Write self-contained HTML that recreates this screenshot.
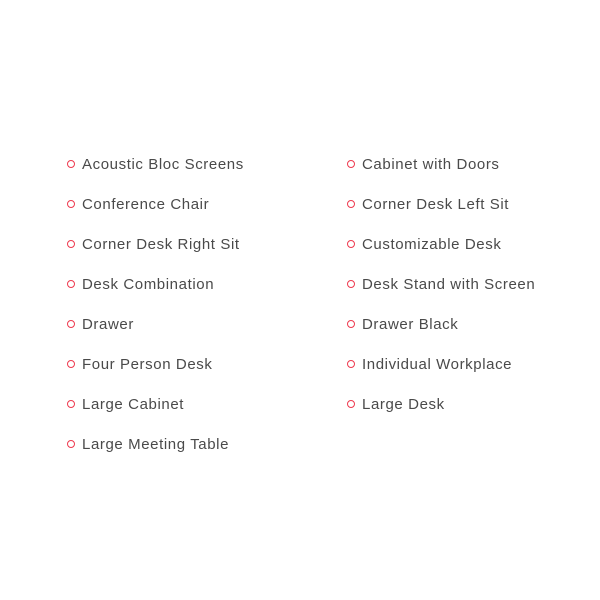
<!DOCTYPE html>
<html><head><style>
body{margin:0;background:#fff;width:600px;height:600px;position:relative;font-family:"Liberation Sans",sans-serif;}
.col{position:absolute;top:155px;}
.it{height:40px;position:relative;font-size:15px;color:#4a4a4a;letter-spacing:0.6px;line-height:20px;padding-left:15px;white-space:nowrap}
.it:before{content:"";position:absolute;left:0;top:5px;width:6px;height:6px;border:1.5px solid #ee3a4f;border-radius:50%;}
</style></head><body>
<div class="col" style="left:67px">
<div class="it">Acoustic Bloc Screens</div>
<div class="it">Conference Chair</div>
<div class="it">Corner Desk Right Sit</div>
<div class="it">Desk Combination</div>
<div class="it">Drawer</div>
<div class="it">Four Person Desk</div>
<div class="it">Large Cabinet</div>
<div class="it">Large Meeting Table</div>
</div>
<div class="col" style="left:347px">
<div class="it">Cabinet with Doors</div>
<div class="it">Corner Desk Left Sit</div>
<div class="it">Customizable Desk</div>
<div class="it">Desk Stand with Screen</div>
<div class="it">Drawer Black</div>
<div class="it">Individual Workplace</div>
<div class="it">Large Desk</div>
</div>
</body></html>
